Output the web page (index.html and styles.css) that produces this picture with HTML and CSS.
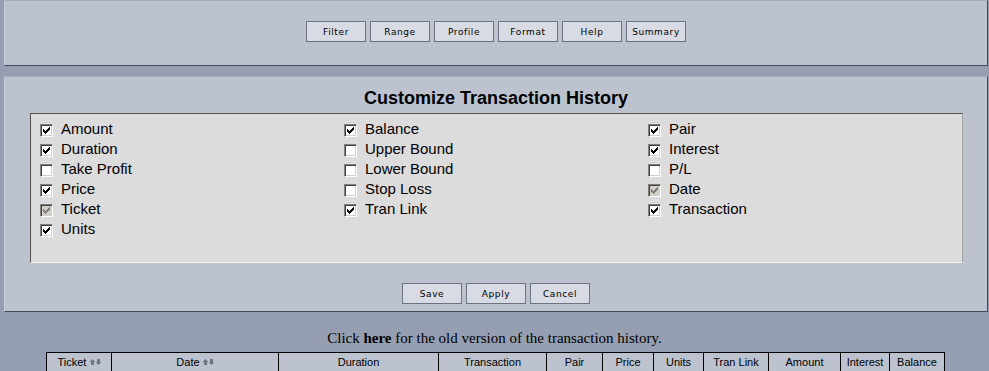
FILE: index.html
```html
<!DOCTYPE html>
<html lang="en">
<head>
  <meta charset="UTF-8">
  <title>Customize Transaction History</title>
  <link rel="stylesheet" href="styles.css">
</head>
<body>
  <div class="panel toolbar">
    <div class="btn-row">
      <button>Filter</button>
      <button>Range</button>
      <button>Profile</button>
      <button>Format</button>
      <button>Help</button>
      <button>Summary</button>
    </div>
  </div>

  <div class="panel customize">
    <h1>Customize Transaction History</h1>
    <div class="fields">
      <div class="col">
        <label class="opt"><span class="box on"></span>Amount</label>
        <label class="opt"><span class="box on"></span>Duration</label>
        <label class="opt"><span class="box"></span>Take Profit</label>
        <label class="opt"><span class="box on"></span>Price</label>
        <label class="opt"><span class="box on off"></span>Ticket</label>
        <label class="opt"><span class="box on"></span>Units</label>
      </div>
      <div class="col">
        <label class="opt"><span class="box on"></span>Balance</label>
        <label class="opt"><span class="box"></span>Upper Bound</label>
        <label class="opt"><span class="box"></span>Lower Bound</label>
        <label class="opt"><span class="box"></span>Stop Loss</label>
        <label class="opt"><span class="box on"></span>Tran Link</label>
      </div>
      <div class="col">
        <label class="opt"><span class="box on"></span>Pair</label>
        <label class="opt"><span class="box on"></span>Interest</label>
        <label class="opt"><span class="box"></span>P/L</label>
        <label class="opt"><span class="box on off"></span>Date</label>
        <label class="opt"><span class="box on"></span>Transaction</label>
      </div>
    </div>
    <div class="btn-row bottom">
      <button>Save</button>
      <button>Apply</button>
      <button>Cancel</button>
    </div>
  </div>

  <p class="old">Click <b>here</b> for the old version of the transaction history.</p>

  <table class="history">
    <tr>
      <th class="w-ticket">Ticket <span class="sort"></span></th>
      <th class="w-date">Date <span class="sort"></span></th>
      <th class="w-duration">Duration</th>
      <th class="w-tran">Transaction</th>
      <th class="w-pair">Pair</th>
      <th class="w-price">Price</th>
      <th class="w-units">Units</th>
      <th class="w-link">Tran Link</th>
      <th class="w-amount">Amount</th>
      <th class="w-interest">Interest</th>
      <th class="w-balance">Balance</th>
    </tr>
  </table>

  <script>
    // checkmark pixels, classic 13px box
    const tick = '<svg width="13" height="13" viewBox="0 0 13 13" shape-rendering="crispEdges">' +
      '<rect x="3" y="5" width="1" height="3"/><rect x="4" y="6" width="1" height="3"/>' +
      '<rect x="5" y="7" width="1" height="3"/><rect x="6" y="6" width="1" height="3"/>' +
      '<rect x="7" y="5" width="1" height="3"/><rect x="8" y="4" width="1" height="3"/>' +
      '<rect x="9" y="3" width="1" height="3"/></svg>';
    document.querySelectorAll(".box.on").forEach((b) => { b.innerHTML = tick; });

    // up / down sort arrows
    const arrows = '<svg width="11" height="6" viewBox="0 0 11 6" shape-rendering="crispEdges">' +
      '<path d="M2 0h1v1h1v1h1v1h-1v3h-3v-3h-1v-1h1v-1h1z"/>' +
      '<path d="M7 0h3v3h1v1h-1v1h-1v1h-1v-1h-1v-1h-1v-1h1z"/></svg>';
    document.querySelectorAll(".sort").forEach((s) => { s.innerHTML = arrows; });
  </script>
</body>
</html>
```

FILE: styles.css
```css
* {
  box-sizing: border-box;
}

body {
  margin: 0;
  background: #959fb1;
  font-family: 'Liberation Sans', Arial, sans-serif;
  color: #000;
}

.panel {
  margin: 0 1px 0 4px;
  background: #bcc3cf;
  border-top: 1px solid #a9aeb8;
  border-left: 1px solid #c9ced8;
  border-right: 1px solid #434856;
  border-bottom: 1px solid #434856;
}

.toolbar {
  height: 66px;
  padding-top: 20px;
}

.customize {
  margin-top: 10px;
  padding: 10px 0 7px;
}

.btn-row {
  display: flex;
  justify-content: center;
  gap: 4px;
}

.btn-row button {
  width: 60px;
  height: 21px;
  padding: 0;
  background: #d8dbe3;
  border: 1px solid #6c7383;
  font-family: 'DejaVu Sans', Verdana, sans-serif;
  font-size: 9px;
  letter-spacing: 0.6px;
  color: #000;
}

.btn-row.bottom {
  margin-top: 20px;
}

h1 {
  margin: 0;
  text-align: center;
  font-size: 18px;
  line-height: 22px;
  font-weight: bold;
}

.fields {
  margin: 4px 24px 0 25px;
  height: 150px;
  background: #dcdcdc;
  border-top: 1px solid #4f4f4f;
  border-left: 1px solid #4f4f4f;
  border-right: 1px solid #a4a4a4;
  border-bottom: 1px solid #f2f2f2;
  padding: 5px 0 0 9px;
  display: grid;
  grid-template-columns: 304px 304px 304px;
}

.col {
  display: flex;
  flex-direction: column;
}

.opt {
  display: flex;
  align-items: center;
  height: 20px;
  font-size: 15px;
  line-height: 20px;
}

.box {
  width: 13px;
  height: 13px;
  margin: 3px 8px 0 0;
  flex: none;
  background: #fff;
  border-top: 1px solid #808080;
  border-left: 1px solid #808080;
  border-right: 1px solid #fff;
  border-bottom: 1px solid #fff;
  box-shadow: inset 1px 1px #404040, inset -1px -1px #d4d0c8;
  position: relative;
}

.box svg {
  position: absolute;
  left: -1px;
  top: -1px;
  fill: #000;
}

.box.off {
  background: #d4d0c8;
}

.box.off svg {
  fill: #808080;
}

.old {
  margin: 18px 0 5px;
  text-align: center;
  font-family: 'Liberation Serif', 'Times New Roman', serif;
  font-size: 15px;
  line-height: 17px;
}

.history {
  margin-left: 46px;
  width: 898px;
  border-collapse: collapse;
  table-layout: fixed;
}

.history th {
  height: 20px;
  padding: 0 0 1px;
  border: 1px solid #000;
  background: #bcc3cf;
  font-size: 11px;
  font-weight: normal;
  text-align: center;
}

.sort svg {
  fill: #707886;
  vertical-align: 1px;
}

.w-ticket { width: 65px; }
.w-date { width: 167px; }
.w-duration { width: 160px; }
.w-tran { width: 108px; }
.w-pair { width: 56px; }
.w-price { width: 51px; }
.w-units { width: 50px; }
.w-link { width: 65px; }
.w-amount { width: 72px; }
.w-interest { width: 49px; }
.w-balance { width: 55px; }
```
